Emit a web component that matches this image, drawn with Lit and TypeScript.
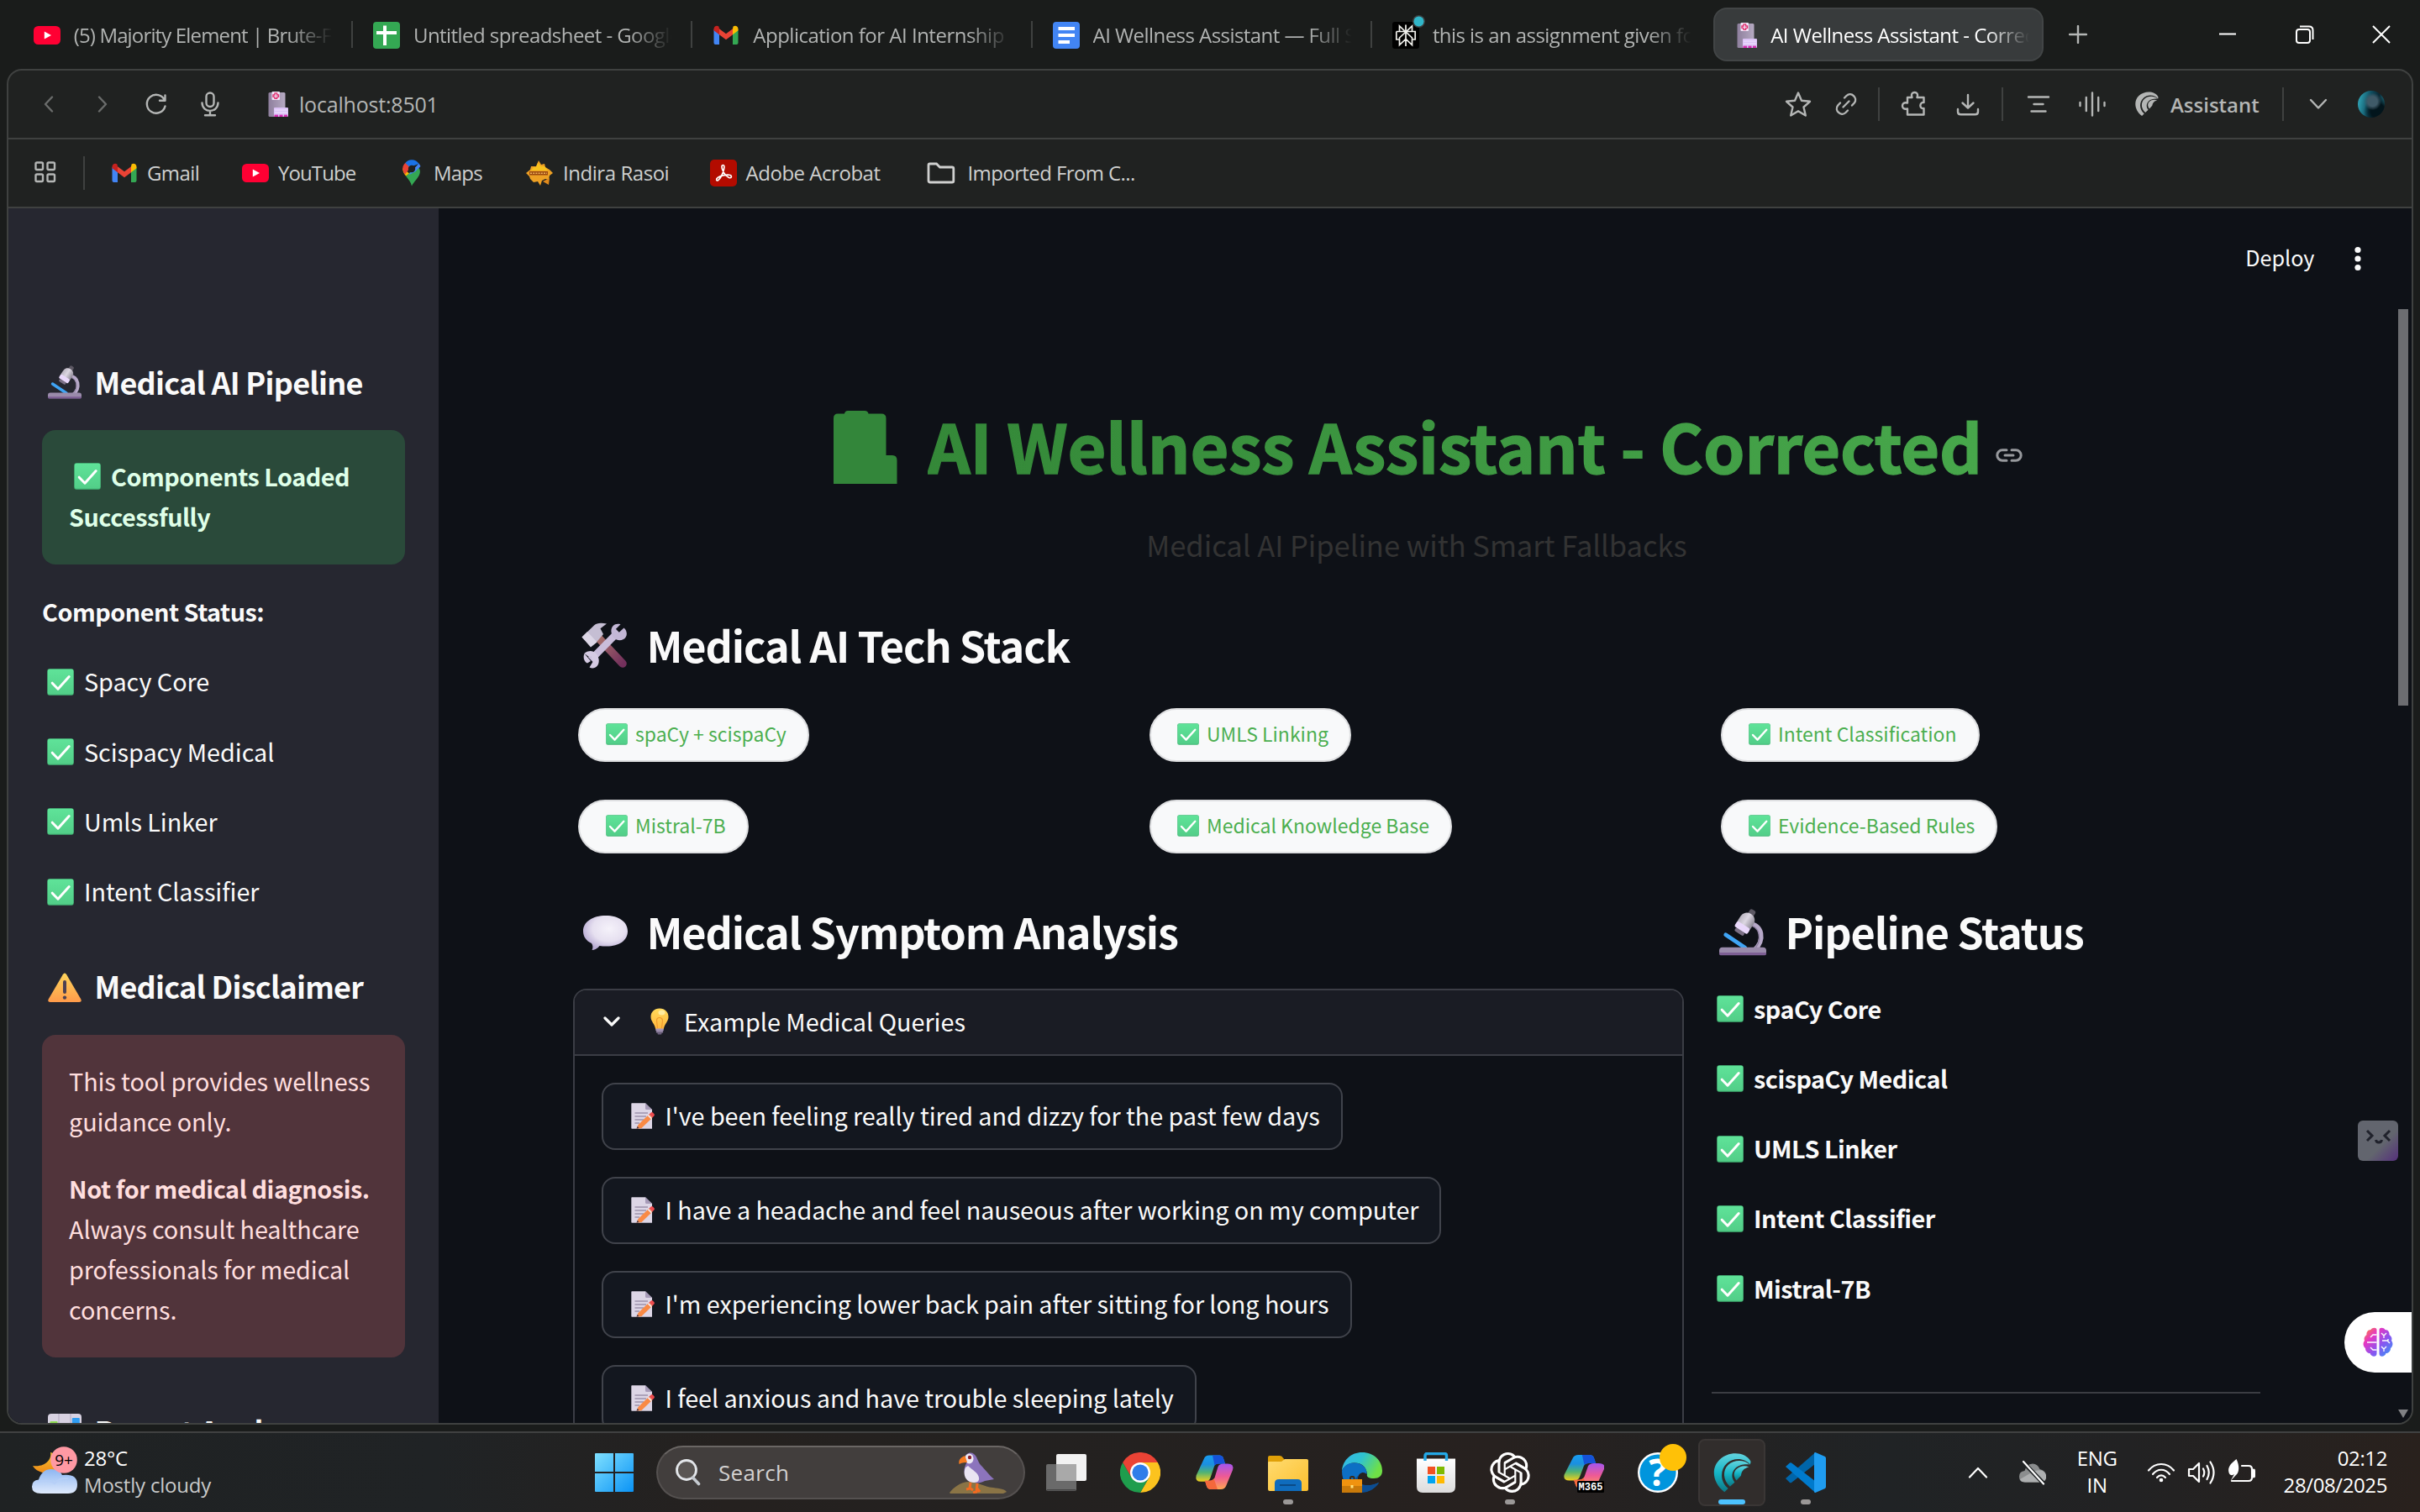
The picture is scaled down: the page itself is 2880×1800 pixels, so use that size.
import { LitElement, html, svg, css } from "lit";
import { customElement } from "lit/decorators.js";
import { classMap } from "lit/directives/class-map.js";

/* ---------- emoji ---------- */

const check = (cls = "e32") => html`<svg class=${cls} viewBox="0 0 32 32">
  <rect x=".3" y=".3" width="31.4" height="31.4" rx="2.6" fill="#43b877" />
  <rect x=".8" y=".8" width="30.6" height="29.6" rx="2.2" fill="url(#gCheck)" />
  <path d="M6.2 17.2 13 24.2 26.2 9.6" fill="none" stroke="#fff" stroke-width="3" stroke-linecap="round" stroke-linejoin="round" />
</svg>`;

const microscope = (cls: string) => html`<svg class="over ${cls}" viewBox="0 0 40 40">
  <path d="M25 12.5C37 13 39 27 30 35" fill="none" stroke="#b7a9c9" stroke-width="4" />
  <path d="M25 12.5C37 13 39 27 30 35" fill="none" stroke="#8d7fa0" stroke-width="1" transform="translate(-1.6 .8)" />
  <path d="M5.5 22 22 33" stroke="#3fa4f5" stroke-width="3.4" stroke-linecap="round" />
  <g transform="translate(0 2.6) rotate(33 21 11)">
    <rect x="18.4" y="-4" width="5.4" height="7" rx="1.6" fill="#5c5863" />
    <rect x="14.6" y="0" width="13" height="17" rx="6" fill="url(#gSilver)" />
    <rect x="14.6" y="11" width="13" height="5.5" rx="1.6" fill="#e9d8fb" />
    <rect x="16.6" y="16.4" width="9" height="3.2" rx="1.4" fill="#7b7086" />
  </g>
  <rect x="0" y="32.6" width="40" height="6.6" rx="2.8" fill="#9a8bab" />
  <rect x="0" y="37.2" width="40" height="2.2" rx="1.1" fill="#7d5f94" />
</svg>`;

const warning = html`<svg class="e40 warn" viewBox="0 0 40 40">
  <path d="M17.8 4.2Q20 1 22.2 4.2L39.3 33.4Q40.6 37 37.4 37H2.6Q-.6 37 .7 33.4Z" fill="url(#gWarn)" />
  <rect x="18" y="11" width="4" height="16" rx="2" fill="#4d4152" />
  <circle cx="20" cy="31.6" r="2.2" fill="#4d4152" />
</svg>`;

const chart = html`<svg class="e40" viewBox="0 0 40 40">
  <rect width="40" height="40" rx="4" fill="#d8d2e2" />
  <path d="M13 0V40M27 0V40M0 20H40" stroke="#b9b0c6" stroke-width="1.2" />
  <rect x="2.5" y="9" width="9" height="31" rx="1" fill="#8fdc52" />
  <rect x="15.5" y="16" width="9" height="24" rx="1" fill="#f0506b" />
  <rect x="28.8" y="5" width="9" height="35" rx="1" fill="#2f9df2" />
</svg>`;

const tools = html`<svg class="e56" viewBox="0 0 56 56">
  <path d="M20 17 50 49" stroke="url(#gHandle)" stroke-width="9.5" stroke-linecap="round" />
  <path d="M1.5 17.5 16 3.5C19 .6 24 0 31 1.5L23.5 7.2 27 14 18 24.5 12 27.5Z" fill="#c5bed3" />
  <path d="M1.5 17.5 8 11l11.5 12.5L12 29.5Z" fill="#dcd6e6" />
  <path d="M12 44.5 45 11" stroke="#c9bddb" stroke-width="8.4" />
  <path d="M51.5 6.5 45 12.6 42.6 11 42 7.8 47.5 2.2C41 .2 35.6 4.5 36.5 11.5 37.5 19 44.5 23.5 51 20 55.5 17.500 56.500 11 51.500 6.500Z" fill="#c3b7d6" />
  <path d="M4.500 37 10.500 41.500 13 40 12.500 43.500 15 46 10.500 53.500C17 57 23 50.500 21.500 43.500 20.500 36.500 14.500 32.500 8.500 34.500 6.500 35.200 5 36 4.500 37ZM4.500 37C2.500 41 4 47 8 48.500L12 46 7 40Z" fill="#d5cbe3" />
</svg>`;

const bubble = html`<svg class="e56" viewBox="0 0 56 56">
  <path d="M30 8C45.500 8 56 15.500 56 26.500 56 37.500 46 44.500 31 44.500 27.500 44.500 25 44.500 22.500 44 20 47.500 16.500 49 13.500 49 15 46.500 14.500 43 13 41 6.500 38 3 33 3 26.500 3 15.500 14 8 30 8Z" fill="url(#gBubble)" />
</svg>`;

const bulb = html`<svg class="bulb" viewBox="0 0 22 32">
  <path d="M11 .5C17.500 .5 21.500 5 21.500 10.500 21.500 16 17 18.500 15.800 25H6.200C5 18.500 .5 16 .5 10.500 .5 5 4.500 .5 11 .5Z" fill="url(#gBulb)" />
  <path d="M8.500 24 7.500 15a3.500 3.500 0 1 1 7 0L13.500 24" fill="none" stroke="#f09a2e" stroke-width="1.200" />
  <ellipse cx="13.500" cy="5.500" rx="4" ry="3" fill="#fff3b0" opacity=".8" />
  <rect x="6.200" y="24.600" width="9.600" height="2.600" rx="1" fill="#a596b5" />
  <rect x="6.800" y="27" width="8.400" height="2.600" rx="1" fill="#8f80a0" />
  <rect x="8.500" y="29.400" width="5" height="2.200" rx="1" fill="#6f6180" />
</svg>`;

const memo = html`<svg class="memo" viewBox="0 0 28 31">
  <path d="M1 .3H17L25 8V30.700H1Q.3 30.700 .3 30V1Q.3 .3 1 .3Z" fill="#ddd6e6" />
  <path d="M17 .3 25 8H18.500Q17 8 17 6.500Z" fill="#a79bb8" />
  <path d="M4.500 12H20M4.500 16H18M4.500 20H15M4.500 24H10" stroke="#9d93ac" stroke-width="1.300" />
  <path d="M21.500 13.500 25.500 17.500 12.500 30 6.500 30.700 8.500 26Z" fill="#f98a45" />
  <path d="M21.500 13.500 24 11.200Q25 10.500 26 11.500L27.500 13.200Q28.300 14.200 27.500 15.300L25.500 17.500Z" fill="#ee4b4e" />
  <path d="M20.300 14.600 24.300 18.600" stroke="#f4eef8" stroke-width="1.500" />
  <path d="M6.500 30.700 7.600 27.800 9.600 30Z" fill="#4b3b50" />
</svg>`;

const hospital = html`<svg class="hosp" viewBox="0 0 24 30">
  <rect x=".5" y="1" width="20" height="29" rx="1.500" fill="url(#gHosp)" />
  <rect x="7" y="19" width="17" height="11" rx="1" fill="#dcc3f6" />
  <path d="M8 22H23M8 25H23" stroke="#f1e6ff" stroke-width="1.200" />
  <rect x="7.500" y="27.600" width="4.500" height="2.400" fill="#d42bb2" />
  <rect x="13.500" y="27.600" width="4" height="2.400" fill="#d42bb2" />
  <rect x="19" y="27.600" width="4" height="2.400" fill="#d42bb2" />
  <rect x="4.500" width="9.500" height="10" rx="1" fill="#efe6f8" />
  <path d="M8 1.800h2.600V4h2V6.400h-2V8.400H8V6.400H6V4H8Z" fill="none" stroke="#e02d6c" stroke-width="1.300" />
</svg>`;

/* ---------- site icons ---------- */

const youtube = html`<svg class="e32" viewBox="0 0 32 32">
  <rect y="5" width="32" height="22" rx="5.500" fill="#ff0033" />
  <path d="M12.800 11.400 21 16 12.800 20.600Z" fill="#fff" />
</svg>`;
const sheets = html`<svg class="e32" viewBox="0 0 32 32">
  <rect width="32" height="32" rx="4" fill="#34a853" />
  <path d="M14 4.500V28M4 13H28" stroke="#fff" stroke-width="4" />
</svg>`;
const gmail = html`<svg class="e32" viewBox="0 0 32 32">
  <path d="M1.500 9V25q0 2 2 2H8V14Z" fill="#4285f4" />
  <path d="M30.500 9V25q0 2-2 2H24V14Z" fill="#34a853" />
  <path d="M24 8.300V15.200L30.500 10.300V8.500C30.500 5.300 27 3.800 24.600 5.600Z" fill="#fbbc04" />
  <path d="M8 8.300 16 14.300 24 8.300V15.200L16 21.200 8 15.200Z" fill="#ea4335" />
  <path d="M8 8.300V15.200L1.500 10.300V8.500C1.500 5.300 5 3.800 7.400 5.600Z" fill="#c5221f" />
</svg>`;
const docs = html`<svg class="e32" viewBox="0 0 32 32">
  <rect width="32" height="32" rx="4" fill="#4285f4" />
  <path d="M6.500 8H26M6.500 16H26M6.500 24H20" stroke="#fff" stroke-width="4" />
</svg>`;
const perplexity = html`<svg class="e32 over" viewBox="0 0 32 32">
  <rect width="32" height="32" rx="3" fill="#000" />
  <path d="M8.500 11.500V5L16 12 23.500 5V11.500M4.800 11.500H27.200V21H23.500M8.500 21H4.800V11.500M16 3.500V29M16 12 8.500 19V27.500L16 20.500 23.500 27.500V19Z" fill="none" stroke="#f2f2ee" stroke-width="1.700" />
  <circle cx="31.500" cy="-.5" r="7.500" fill="#3c4243" />
  <circle cx="31.500" cy="-.5" r="6" fill="#30b6c9" />
</svg>`;
const maps = html`<svg class="e32" viewBox="0 0 32 32">
  <path d="M16 31.500C15 27 12.500 24 9 19.500L22.500 7.500C28 13 26 18 22 23 19 26.500 17.200 29 16 31.500Z" fill="#34a853" />
  <path d="M9 19.500C6.500 16.500 5 13.500 5.300 10L13 16.500Z" fill="#fbbc04" />
  <path d="M8.500 3.800 15 8.500 8 17.500C4 12 4.500 7.500 8.500 3.800Z" fill="#ea4335" />
  <path d="M16 .3C12.500 .3 10.200 1.800 8.300 4L13.500 9 24.500 5C22.800 2 19.800 .3 16 .3Z" fill="#1a73e8" />
  <path d="M24.500 4.600 12 18.500 20 14.500 26.500 8Z" fill="#4285f4" />
  <circle cx="16" cy="11" r="4.200" fill="#1f2120" />
</svg>`;
const rasoi = html`<svg class="e32" viewBox="0 0 32 32">
  <path d="M15 1 18 6 22 5 23 9 28 12 32 16 28 19 27 24 23 23 19 25 17 31 14 26 9 27 5 23 4 20 0 16 5 12 6 8 12 8Z" fill="#eda024" />
  <path d="M14 4 18 8 22 8 26 13 6 13 9 9 12 9Z" fill="#f7c21f" />
  <rect x="4" y="14" width="22" height="4.500" fill="#9c4a10" />
  <path d="M5 16.200H25" stroke="#f2b45a" stroke-width="1.400" stroke-dasharray="2 1.200" />
  <path d="M20 26 28 22 27 30Z" fill="#e08a1c" />
</svg>`;
const acrobat = html`<svg class="e32" viewBox="0 0 32 32">
  <rect width="32" height="32" rx="5" fill="#b30b00" />
  <path d="M15.500 6.500C13.500 6.500 13.700 9.500 15.200 13 16.500 16.500 19 19.500 22.500 21.500 25.500 22.500 26.500 19.500 24 18.500 20 17.500 13 19 9.500 21.200 6.500 23 7.500 26 9.800 24.500 12.500 22 15.500 15.500 16.500 11.500 17.200 8.500 17 6.500 15.500 6.500Z" fill="none" stroke="#fff" stroke-width="1.700" />
</svg>`;
const folderLine = html`<svg class="folder" viewBox="0 0 34 26">
  <path d="M2 3.500Q2 2 3.500 2H11.500L15.500 6H30Q31.800 6 31.800 7.800V22.200Q31.800 24 30 24H4Q2 24 2 22Z" fill="none" stroke="#cfd0cf" stroke-width="2.800" />
</svg>`;

/* Fan of curved blades; shared by the toolbar button and the dock icon. */
const blades = (fill: string) => svg`
  <path d="M10 32C.5 25 -1.500 12.500 6 5.500 13-1.500 27-1.500 31.500 7L31 9.500C27 4.500 18 3 12 8.500 6 14 6.500 24 13 29Z" fill=${fill} />
  <path d="M14.500 27.500C8.500 22 8.500 14 13 9.800 17.500 5.500 26 5 30.500 9.500 27 9 22 9.500 18.800 12.600 15.500 16 15.500 20.500 18.300 24Z" fill=${fill} />
  <path d="M19.800 22.500C17 19 17.500 15.500 19.800 13.300 22.500 10.700 26.500 10 30 11.500 26 12.500 24 14.500 23.500 18.500Z" fill=${fill} />`;

const copilot = svg`
  <path d="M10 4Q11.500 0 16 0H28Q32 0 33 4L35 11H27Q23 11 21.800 15L17.500 29Q16 34 11 34H6Q-1 34 .6 26Z" fill="url(#gCopA)" />
  <path d="M20 0H28Q32 0 33 4L35 11H27Q24 11 22.500 13Z" fill="#1552d8" />
  <path d="M36 40Q34.500 44 30 44H18Q14 44 13 40L11 33H16Q21 33 22.500 29L26.500 15Q28 11 33 11H38Q46 11 44 19Z" fill="url(#gCopB)" />
  <path d="M26 44H18Q14 44 13 40L11 33H16Q20 33 21.500 30Z" fill="#f4683c" />`;

/* ---------- dock ---------- */

interface DockApp { icon: unknown; run?: boolean; active?: boolean; }

const dock: DockApp[] = [
  { icon: html`<svg class="e48" viewBox="0 0 48 48"><rect x="12" y="2" width="36" height="32" rx="2" fill="#f2f2f2" /><rect y="14" width="36" height="32" rx="2" fill="#6a6a6a" /><path d="M12 14H36V34H12Z" fill="#a9a9a9" /><path d="M1 44.800H35" stroke="#444" stroke-width="1.500" /></svg>` },
  { icon: html`<svg class="e48" viewBox="0 0 48 48"><path d="M24 24V12H44.800A24 24 0 0 1 24 48L34.400 30Z" fill="#fcc31e" /><path d="M3.200 12 13.600 30 24 36 34.400 30 24 48A24 24 0 0 1 3.200 12Z" fill="#1f9d4d" /><path d="M13.600 30 3.200 12A24 24 0 0 1 44.800 12H24V24Z" fill="#ea4335" /><circle cx="24" cy="24" r="12" fill="#fff" /><circle cx="24" cy="24" r="9.600" fill="#2f7de9" /></svg>` },
  { icon: html`<svg class="e48" viewBox="-2 -2 48 48"><g transform="translate(0 1.500) scale(1 .92)">${copilot}</g></svg>` },
  { icon: html`<svg class="e48" viewBox="0 0 48 48"><path d="M0 6Q0 4 2 4H14Q16 4 17 5.500L20 9H46Q48 9 48 11V20H0Z" fill="#e0a008" /><path d="M0 12Q0 11 1 11H16L20 8H46Q48 8 48 10V44Q48 46 46 46H2Q0 46 0 44Z" fill="url(#gFolder)" /><path d="M8 46V37Q8 32 13 32H35Q40 32 40 37V46Z" fill="#0f6cbd" /><path d="M14 39H33" stroke="#0b4a86" stroke-width="2" /></svg>`, run: true },
  { icon: html`<svg class="e48" viewBox="0 0 48 48"><path d="M0 22C1 9 11 0 24 0 38 0 48 10 48 22 48 28 44 31 38 31 32 31 29 29.500 30 26 29 16 22 12 14 12.500 7 13 2 17 0 22Z" fill="url(#gEdgeA)" /><path d="M0 22C3 15 9 12 15 12.500 24 13 30 18 29.500 26 26 22 20 24 19 30 18 38 26 44 44 36 38 45 28 49 18 47 7 44 0 35 0 22Z" fill="#0d6fc4" /><path d="M19 30C18 39 30 42 44 36 38 45 30 48 24 47.500 15 44 12 34 19 28Z" fill="#0c4d92" /><path d="M10 32V30.500Q10 29 11.500 29H13Q14.500 29 14.500 30.500V32" fill="none" stroke="#3a2a1a" stroke-width="2" /><rect y="32" width="24" height="16" fill="#c97a0a" /><rect y="32" width="24" height="8" fill="#f0930f" /><rect x="10.500" y="39" width="3" height="3.500" fill="#ffe27a" /></svg>` },
  { icon: html`<svg class="e48" viewBox="0 0 48 48"><path d="M1 7.500H47V41Q47 48 40 48H8Q1 48 1 41Z" fill="url(#gStore)" /><path d="M11 10V4Q11 1.500 13.500 1.500H34Q36.500 1.500 36.500 4V10" fill="none" stroke="#24a8e6" stroke-width="3.400" /><rect x="14" y="17" width="9" height="9" fill="#f25022" /><rect x="25" y="17" width="9" height="9" fill="#7fba00" /><rect x="14" y="28" width="9" height="9" fill="#00a4ef" /><rect x="25" y="28" width="9" height="9" fill="#ffb900" /></svg>` },
  { icon: html`<svg class="e48" viewBox="0 0 24 24"><path fill="#fff" d="M22.2819 9.8211a5.9847 5.9847 0 0 0-.5157-4.9108 6.0462 6.0462 0 0 0-6.5098-2.9A6.0651 6.0651 0 0 0 4.9807 4.1818a5.9847 5.9847 0 0 0-3.9977 2.9 6.0462 6.0462 0 0 0 .7427 7.0966 5.98 5.98 0 0 0 .511 4.9107 6.051 6.051 0 0 0 6.5146 2.9001A5.9847 5.9847 0 0 0 13.2599 24a6.0557 6.0557 0 0 0 5.7718-4.2058 5.9894 5.9894 0 0 0 3.9977-2.9001 6.0557 6.0557 0 0 0-.7475-7.0729zm-9.022 12.6081a4.4755 4.4755 0 0 1-2.8764-1.0408l.1419-.0804 4.7783-2.7582a.7948.7948 0 0 0 .3927-.6813v-6.7369l2.02 1.1686a.071.071 0 0 1 .038.052v5.5826a4.504 4.504 0 0 1-4.4945 4.4944zm-9.6607-4.1254a4.4708 4.4708 0 0 1-.5346-3.0137l.142.0852 4.783 2.7582a.7712.7712 0 0 0 .7806 0l5.8428-3.3685v2.3324a.0804.0804 0 0 1-.0332.0615L9.74 19.9502a4.4992 4.4992 0 0 1-6.1408-1.6464zM2.3408 7.8956a4.485 4.485 0 0 1 2.3655-1.9728V11.6a.7664.7664 0 0 0 .3879.6765l5.8144 3.3543-2.0201 1.1685a.0757.0757 0 0 1-.071 0l-4.8303-2.7865A4.504 4.504 0 0 1 2.3408 7.872zm16.5963 3.8558L13.1038 8.364 15.1192 7.2a.0757.0757 0 0 1 .071 0l4.8303 2.7913a4.4944 4.4944 0 0 1-.6765 8.1042v-5.6772a.79.79 0 0 0-.407-.667zm2.0107-3.0231l-.142-.0852-4.7735-2.7818a.7759.7759 0 0 0-.7854 0L9.409 9.2297V6.8974a.0662.0662 0 0 1 .0284-.0615l4.8303-2.7866a4.4992 4.4992 0 0 1 6.6802 4.66zM8.3065 12.863l-2.02-1.1638a.0804.0804 0 0 1-.038-.0567V6.0742a4.4992 4.4992 0 0 1 7.3757-3.4537l-.142.0805L8.704 5.459a.7948.7948 0 0 0-.3927.6813zm1.0976-2.3654l2.602-1.4998 2.6069 1.4998v2.9994l-2.5974 1.4997-2.6067-1.4997Z" /></svg>`, run: true },
  { icon: html`<svg class="e48" viewBox="0 0 48 48"><g transform="translate(0 3) scale(1.090 .9)">${copilot}</g><rect x="16" y="34" width="32" height="14" rx="1.500" fill="#000" /><text class="m365" x="32" y="45.300" text-anchor="middle">M365</text></svg>` },
  { icon: html`<svg class="e48 over" viewBox="0 0 48 48"><circle cx="24" cy="24" r="24" fill="#fff" /><circle cx="24" cy="24" r="21.600" fill="#0095dd" /><text class="qmark" x="24" y="40" text-anchor="middle">?</text><circle cx="42" cy="6" r="16" fill="#ffc107" /></svg>` },
  { icon: html`<svg class="e48" viewBox="-.5 -.5 33 33">${blades("url(#gTeal)")}</svg>`, run: true, active: true },
  { icon: html`<svg class="e48" viewBox="0 0 48 48"><path d="M0 31 5 36Q6 36.500 7 36L40 10 35.500 0Z" fill="#0065a9" /><path d="M0 17 5 12.500Q6 12 7 12.500L40 38 35.500 48Z" fill="#007acc" /><path d="M35.500 0 47 5Q48 6 48 7V41Q48 42 47 43L35.500 48Q33.500 48 34 46V2Q33.500 0 35.500 0Z" fill="#1f9cf0" /></svg>`, run: true },
];

const tabs = [
  { icon: youtube, title: "(5) Majority Element | Brute-Force", cls: "t0" },
  { icon: sheets, title: "Untitled spreadsheet - Google Sheets", cls: "t1" },
  { icon: gmail, title: "Application for AI Internship P", cls: "t2" },
  { icon: docs, title: "AI Wellness Assistant — Full Stack", cls: "t3" },
  { icon: perplexity, title: "this is an assignment given for", cls: "t4" },
  { icon: hospital, title: "AI Wellness Assistant - Corrected", cls: "t5" },
];

const bookmarks = [
  { icon: gmail, label: "Gmail", cls: "b0" },
  { icon: youtube, label: "YouTube", cls: "b1" },
  { icon: maps, label: "Maps", cls: "b2" },
  { icon: rasoi, label: "Indira Rasoi", cls: "b3" },
  { icon: acrobat, label: "Adobe Acrobat", cls: "b4" },
  { icon: folderLine, label: "Imported From C...", cls: "b5" },
];

const components = ["Spacy Core", "Scispacy Medical", "Umls Linker", "Intent Classifier"];
const stack = ["spaCy + scispaCy", "UMLS Linking", "Intent Classification", "Mistral-7B", "Medical Knowledge Base", "Evidence-Based Rules"];
const pipeline = ["spaCy Core", "scispaCy Medical", "UMLS Linker", "Intent Classifier", "Mistral-7B"];
const queries = [
  "I've been feeling really tired and dizzy for the past few days",
  "I have a headache and feel nauseous after working on my computer",
  "I'm experiencing lower back pain after sitting for long hours",
  "I feel anxious and have trouble sleeping lately",
];

@customElement("app-root")
export class AppRoot extends LitElement {
  static styles = css`
    :host {
      display: flex;
      flex-direction: column;
      position: relative;
      width: 2880px;
      height: 1800px;
      overflow: hidden;
      background: #1a1c1b;
      color: #fafafa;
      font-family: "Open Sans", "Noto Sans", sans-serif;
      font-size: 24px;
      white-space: nowrap;
    }
    * { box-sizing: border-box; }
    svg { display: block; flex: none; }
    h1, h2, p { margin: 0; font: inherit; }
    .defs { position: absolute; width: 0; height: 0; }
    .e26 { width: 26px; height: 26px; }
    .e32 { width: 32px; height: 32px; }
    .e40 { width: 40px; height: 40px; }
    .e48 { width: 48px; height: 48px; }
    .e56 { width: 56px; height: 56px; }
    .over { overflow: visible; }
    .ic { fill: none; stroke: #b4b6b5; stroke-width: 2.4; stroke-linecap: round; stroke-linejoin: round; }

    /* tab strip */
    .tabs { display: flex; align-items: center; height: 82px; padding-left: 15.7px; flex: none; }
    .tab { display: flex; align-items: center; width: 404.3px; height: 64px; padding-left: 24px; gap: 16px; position: relative; color: #b1b3b2; }
    .tab::after { content: ""; position: absolute; right: 0; top: 16px; width: 2px; height: 32px; background: #3f4140; }
    .tab.t4::after { display: none; }
    .fav { width: 32px; display: flex; justify-content: center; padding-top: 2px; flex: none; }
    .hosp { width: 24px; height: 30px; }
    .title { width: 308px; overflow: hidden; letter-spacing: -0.5px; -webkit-mask-image: linear-gradient(90deg, #000 256px, transparent 308px); mask-image: linear-gradient(90deg, #000 256px, transparent 308px); }
    .t0 .title { letter-spacing: -0.85px; }
    .t1 .title { letter-spacing: -0.56px; }
    .t3 .title { letter-spacing: -0.56px; }
    .t4 .title { letter-spacing: -0.56px; }
    .tab.t5 { width: 393px; margin-left: 2px; gap: 12px; background: #383b3c; border: 2px solid #424546; border-radius: 16px; padding-left: 22px; color: #fff; }
    .tab.t5::after { display: none; }
    .newtab { width: 22px; height: 22px; margin-left: 30px; }
    .winbtns { display: flex; align-items: center; margin-left: auto; padding-right: 35px; gap: 69.5px; }
    .win { width: 22px; height: 22px; fill: none; stroke: #fff; stroke-width: 2; }

    /* browser window */
    .window { display: flex; flex-direction: column; width: 2864px; height: 1614px; margin-left: 8px; flex: none; border: 2px solid #3f4140; border-radius: 18px; overflow: hidden; background: #202221; }
    .bar { display: flex; align-items: center; height: 82px; flex: none; border-bottom: 2px solid #3f4140; }
    .toolbar { padding-left: 16px; padding-right: 32px; }
    .cell { width: 64px; display: flex; justify-content: center; flex: none; }
    .cell.star { width: 56px; }
    .cell.link { width: 57px; }
    .dim { stroke: #6a6c6b; }
    .url { display: flex; align-items: center; gap: 13px; margin-left: 37px; font-size: 25px; color: #b4b6b5; letter-spacing: -0.2px; }
    .right { display: flex; align-items: center; margin-left: auto; }
    .div { width: 2px; height: 40px; background: #3f4140; flex: none; }
    .d1 { margin: 0 9px 0 10px; }
    .d2 { margin: 0 10px 0 8px; }
    .d3 { margin: 0 9px 0 27px; }
    .assistant { display: flex; align-items: center; gap: 14px; margin-left: 18px; font-weight: 600; color: #b4b6b5; width: 149px; }
    .avatar { width: 32px; height: 32px; border-radius: 50%; margin-left: 15px; background: radial-gradient(circle at 55% 40%, #3f5a68 0 22%, transparent 40%), radial-gradient(circle at 75% 75%, #02151c 0 25%, transparent 50%), linear-gradient(100deg, #35b2c4, #0e4a5c 45%, #0a2733 70%, #2a98ab); }
    .marks { padding: 0 0 2px 31px; color: #cfd0cf; }
    .marks .div { margin: 2px 31px 0 32px; }
    .mark { display: flex; align-items: center; }
    .mark svg { margin-top: 2px; }
    .b0 { letter-spacing: -0.6px; width: 156px; gap: 11px; }
    .b1 { letter-spacing: -0.9px; width: 186px; gap: 11px; }
    .b2 { letter-spacing: -0.8px; width: 152px; gap: 10px; }
    .b3 { letter-spacing: -0.45px; width: 218.5px; gap: 12px; }
    .b4 { letter-spacing: -0.47px; width: 258px; gap: 11px; }
    .b5 { letter-spacing: -0.6px; gap: 15px; }
    .folder { width: 34px; height: 26px; }

    /* page */
    .page { display: flex; flex: 1; min-height: 0; position: relative; font-family: "Noto Sans CJK JP", "Open Sans", sans-serif; font-size: 28.8px; line-height: 48px; background: #0e1117; }
    .sidebar { width: 512px; height: 1446px; overflow: hidden; flex: none; background: #262730; padding: 182px 40px 0 40px; }
    .row { display: flex; align-items: center; }
    .side-h { display: flex; align-items: center; height: 48px; padding-left: 7px; gap: 15.5px; font-size: 36px; font-weight: 700; letter-spacing: -0.76px; }
    .side-h .over { margin-top: 2px; }
    .side-h .warn { margin-top: 6px; }
    .side-h.second { margin-top: 64px; }
    .side-h.third { margin-top: 63px; }
    .ok { height: 160px; margin-top: 34px; padding: 31px 32px; border-radius: 16px; background: #2a4a3a; color: #dfffe8; font-weight: 700; letter-spacing: -0.47px; }
    .ok .row { padding-left: 6px; gap: 12px; }
    .strong { font-weight: 700; letter-spacing: -0.5px; }
    .status { margin-top: 32.4px; }
    .items { display: flex; flex-direction: column; gap: 35.3px; margin-top: 35px; padding-left: 6px; }
    .items .row { gap: 12px; height: 48px; letter-spacing: -0.05px; }
    .items svg { margin-top: 1px; }
    .alert { height: 384px; margin-top: 35px; padding: 30.4px 32px; border-radius: 16px; background: #51343b; color: #ffdede; letter-spacing: -0.1px; }
    .alert p + p { margin-top: 32px; }
    .alert .strong { letter-spacing: -0.42px; }

    .main { flex: 1; height: 1446px; overflow: hidden; padding: 0 180px 0 160px; }
    .deploy { display: flex; align-items: center; justify-content: flex-end; height: 116px; margin-right: -123px; font-size: 25.2px; gap: 44.5px; }
    .dots { width: 14px; height: 30px; margin-top: 4px; }
    .h1 { display: flex; align-items: center; height: 96px; margin-top: 117.5px; padding-left: 310px; font-size: 79.2px; line-height: 96px; font-weight: 700; letter-spacing: -0.2px; }
    .h1 span { margin-left: 36px; background: linear-gradient(90deg, #348838, #47a74b); -webkit-background-clip: text; background-clip: text; color: transparent; -webkit-text-stroke: 1.4px transparent; }
    .silhouette { width: 76px; height: 88px; margin-top: 6px; }
    .anchor { width: 32px; height: 16px; margin: 24px 0 0 16.5px; fill: none; stroke: #97999d; stroke-width: 3; stroke-linecap: round; }
    .sub { height: 58px; line-height: 58px; margin-top: 41.5px; text-align: center; font-size: 34.56px; letter-spacing: -0.05px; color: #333; }
    .h2 { display: flex; align-items: center; height: 68px; padding: 2px 0 0 9px; gap: 22.5px; font-size: 50.4px; font-weight: 700; letter-spacing: -1.12px; }
    .h2 svg { margin-top: 2px; }
    .h2.first { margin-top: 56px; }
    .pills { display: grid; grid-template-columns: repeat(3, 680px); gap: 45px 0; margin: 42px -60px 0 6px; }
    .pill { display: flex; align-items: center; width: max-content; height: 64px; padding: 0 25px 5px 31px; gap: 9px; border: 2px solid #dedfe1; border-radius: 40px; background: #f8f9fa; color: #4caf50; font-size: 23px; line-height: 36px; }
    .pill svg { margin-top: 3px; }
    .cols { display: flex; gap: 33px; margin-top: 58px; }
    .left { width: 1322px; flex: none; }
    .rightcol { flex: 1; }
    .expander { height: 700px; margin-top: 35px; border: 2px solid #3b3d45; border-radius: 16px; overflow: hidden; }
    .exp-h { display: flex; align-items: center; height: 78px; padding: 0 0 3px 34px; border-bottom: 2px solid #3b3d45; background: #1a1c24; }
    .chev { width: 20px; height: 12px; margin-right: 36px; fill: none; stroke: #fafafa; stroke-width: 3.2; stroke-linecap: round; stroke-linejoin: round; }
    .bulb { width: 22px; height: 32px; margin-right: 18px; }
    .queries { display: flex; flex-direction: column; align-items: flex-start; gap: 32px; padding: 32px; }
    .q { display: flex; align-items: center; height: 80px; padding: 0 25px 3px 33px; gap: 12.5px; border: 2px solid #40434b; border-radius: 16px; background: #13171f; letter-spacing: -0.07px; }
    .memo { width: 28px; height: 31px; margin-top: 2px; }
    .rightcol .items { margin-top: 34.5px; padding-left: 6px; }
    .rightcol .items .row { font-weight: 700; letter-spacing: -0.5px; gap: 12px; }
    .rule { height: 2px; margin-top: 99.5px; background: #3b3d43; }

    /* floating widgets over the page */
    .thumb { position: absolute; right: 4px; top: 120px; width: 12px; height: 472px; background: #6c6d71; }
    .arrow { position: absolute; right: 4px; bottom: 6px; width: 12px; height: 11px; }
    .face { position: absolute; right: 16px; top: 1086px; width: 48px; height: 48px; border-radius: 6px; background: linear-gradient(135deg, #62656e 0 60%, #55307c 100%); }
    .brain { position: absolute; right: 0; top: 1314px; width: 80px; height: 72px; border-radius: 36px 0 0 36px; background: #fff; padding: 18px 0 0 21px; }

    /* taskbar */
    .taskbar { display: flex; align-items: center; height: 96px; margin-top: 8px; flex: none; border-top: 2px solid #404141; background: linear-gradient(90deg, #1f2223 0, #202325 18%, #25211f 30%, #232120 42%, #27211f 62%, #202325 78%, #222223 88%, #29211d 100%); color: #fff; }
    .weather { display: flex; width: 708px; padding: 0 0 3px 38px; flex: none; line-height: 32px; letter-spacing: -0.2px; }
    .weather svg { width: 58px; height: 58px; margin: 2px 4px 0 0; }
    .weather .cond { color: #c9caca; }
    .start { width: 46px; height: 46px; margin-right: 27px; }
    .search { display: flex; align-items: center; width: 439px; height: 64px; margin-right: 5px; padding: 0 20px 0 21px; border-radius: 32px; border: 2px solid #555150; border-top-color: #6a6664; background: #423e3d; color: #d2d1d0; font-size: 26px; letter-spacing: 0.3px; }
    .search .mag { width: 30px; height: 32px; margin-right: 21px; }
    .search .bird { width: 68px; height: 50px; margin-left: auto; }
    .app { position: relative; display: flex; align-items: center; justify-content: center; width: 88px; height: 80px; }
    .app.active::before { content: ""; position: absolute; inset: 0 4px; border-radius: 8px; background: #312d2c; border: 2px solid #3a3635; }
    .app svg { position: relative; }
    .app.run::after { content: ""; position: absolute; left: 50%; bottom: 2px; width: 12px; height: 6px; margin-left: -6px; border-radius: 3px; background: #9b9897; }
    .app.active::after { width: 32px; margin-left: -16px; background: #4cc2ff; }
    .m365 { font: 700 12px "Liberation Mono", monospace; fill: #fff; }
    .qmark { font: 700 45px "Open Sans", sans-serif; fill: #fff; }
    .badge { font: 400 19px "Open Sans", sans-serif; fill: #000; }
    .tray { display: flex; align-items: center; margin-left: auto; padding: 0 39px 2px 0; line-height: 32px; letter-spacing: -0.4px; }
    .tray svg { margin-top: 2px; fill: none; stroke: #fff; stroke-width: 2.2; stroke-linecap: round; stroke-linejoin: round; }
    .up { width: 24px; height: 14px; margin-right: 36px; }
    .cloud { width: 34px; height: 30px; margin-right: 36px; }
    .lang { text-align: center; width: 48px; margin-right: 35px; }
    .wifi { width: 34px; height: 24px; margin-right: 14px; }
    .vol { width: 34px; height: 32px; margin-right: 14px; }
    .bat { width: 34px; height: 32px; margin-right: 33px; }
    .clock { text-align: right; }
  `;

  private renderDefs() {
    const lin = (id: string, stops: [string, string][], x2 = 0, y2 = 1) => svg`<linearGradient id=${id} x1="0" y1="0" x2=${x2} y2=${y2}>${stops.map(([o, c]) => svg`<stop offset=${o} stop-color=${c} />`)}</linearGradient>`;
    return html`<svg class="defs" aria-hidden="true"><defs>
      ${lin("gCheck", [["0", "#5fe399"], ["1", "#52ce88"]])}
      ${lin("gSilver", [["0", "#b9b4c0"], [".45", "#dcd7e2"], ["1", "#8f8a97"]], 1, 0)}
      ${lin("gWarn", [["0", "#fdd55c"], ["1", "#ff9b4a"]])}
      ${lin("gHandle", [["0", "#a9726b"], ["1", "#73305c"]], 1, 1)}
      ${lin("gBulb", [["0", "#ffd95a"], ["1", "#ffb73e"]])}
      ${lin("gHosp", [["0", "#8e7f9d"], ["1", "#b6aac2"]], 1, 0)}
      ${lin("gCopA", [["0", "#199df0"], [".35", "#1b8fe0"], [".65", "#4fb374"], ["1", "#f2cf1b"]])}
      ${lin("gCopB", [["0", "#a455f0"], [".5", "#ef5a94"], ["1", "#ffa653"]])}
      ${lin("gFolder", [["0", "#ffdb70"], ["1", "#fcc02e"]], 1, 1)}
      ${lin("gEdgeA", [["0", "#35b5e8"], [".5", "#2fc3d0"], ["1", "#6fe046"]], 1, 0.4)}
      ${lin("gStore", [["0", "#fff"], ["1", "#dcdcdc"]])}
      ${lin("gTeal", [["0", "#62d3de"], [".5", "#15b5c6"], ["1", "#0d7885"]])}
      ${lin("gStart", [["0", "#7fe0ff"], ["1", "#0a93f5"]], 1, 1)}
      ${lin("gCloud", [["0", "#8db6f2"], ["1", "#dfeafc"]])}
      ${lin("gMoon", [["0", "#f7c531"], ["1", "#ef8a17"]])}
      ${lin("gBrain", [["0", "#ff8a2c"], [".3", "#e637c3"], [".6", "#8a55f0"], ["1", "#2f9bf7"]], 1, 1)}
      <radialGradient id="gBubble" cx=".58" cy=".38" r=".62"><stop offset="0" stop-color="#f5f2fa" /><stop offset=".6" stop-color="#e6e0f0" /><stop offset="1" stop-color="#b9acd4" /></radialGradient>
    </defs></svg>`;
  }

  private renderToolbar() {
    return html`<div class="bar toolbar">
      <div class="cell"><svg class="ic dim" width="14" height="20" viewBox="0 0 14 20"><path d="M11 1.500 3 10 11 18.500" /></svg></div>
      <div class="cell"><svg class="ic dim" width="14" height="20" viewBox="0 0 14 20"><path d="M3 1.500 11 10 3 18.500" /></svg></div>
      <div class="cell"><svg class="ic" width="28" height="28" viewBox="0 0 28 28"><path d="M24.500 16.500A11 11 0 1 1 24 9.500M24.500 3.500V9.800H18" /></svg></div>
      <div class="cell"><svg class="ic" width="24" height="30" viewBox="0 0 24 30"><rect x="7.500" y="1.500" width="9" height="16.500" rx="4.500" /><path d="M2.500 13.500C3 26 21 26 21.500 13.500M12 23V28M6 28.300H18" /></svg></div>
      <div class="url">${hospital}<span>localhost:8501</span></div>
      <div class="right">
        <div class="cell star"><svg class="ic" width="32" height="32" viewBox="0 0 32 32"><path d="M16 2.500 20 11.800 30 12.800 22.500 19.500 24.800 29.500 16 24.200 7.200 29.500 9.500 19.500 2 12.800 12 11.800Z" /></svg></div>
        <div class="cell link"><svg class="ic" width="28" height="28" viewBox="0 0 28 28"><path d="M12 6.500 14.500 4C20-1.200 28.500 6.500 23.800 12.500L21 15.500M16 21.500 13.500 24C8 29.200-.5 21.500 4.200 15.500L7 12.500M10.500 17.500 17.500 10.500" /></svg></div>
        <div class="div d1"></div>
        <div class="cell"><svg class="ic" width="32" height="32" viewBox="0 0 32 32"><path d="M8 8H13.500C12 3.500 14 2 16.500 2S21 3.500 19.500 8H27.500V14C22.500 13 21.500 22 27.500 21V28.500H8V21.500C3.500 22.500 2 20.500 2 18S3.500 13.500 8 14.500Z" /></svg></div>
        <div class="cell"><svg class="ic" width="28" height="28" viewBox="0 0 28 28"><path d="M14 3V18M7.500 12.500 14 18.500 20.500 12.500M2 20V23Q2 26.300 5.500 26.300H22.500Q26 26.300 26 23V20" /></svg></div>
        <div class="div d2"></div>
        <div class="cell"><svg class="ic" width="28" height="24" viewBox="0 0 28 24"><path d="M2 3.500H26M8.500 12H19.500M5.500 20.500H22.500" /></svg></div>
        <div class="cell"><svg class="ic" width="34" height="30" viewBox="0 0 34 30"><path d="M2.500 13V17M9.800 7V23M17 1.500V28.500M24.200 7V23M31.500 13V17" /></svg></div>
        <div class="assistant"><svg width="29" height="30" viewBox="0 0 32 33">${blades("#b4b6b5")}</svg><span>Assistant</span></div>
        <div class="div d3"></div>
        <div class="cell"><svg class="ic" width="22" height="14" viewBox="0 0 22 14"><path d="M2 2 11 11.500 20 2" /></svg></div>
        <div class="avatar"></div>
      </div>
    </div>`;
  }

  render() {
    return html`${this.renderDefs()}
      <div class="tabs">
        ${tabs.map((t) => html`<div class="tab ${t.cls}"><div class="fav">${t.icon}</div><div class="title">${t.title}</div></div>`)}
        <svg class="newtab ic" viewBox="0 0 22 22"><path d="M11 1V21M1 11H21" /></svg>
        <div class="winbtns">
          <svg class="win" viewBox="0 0 22 22"><path d="M1 10.500H21" /></svg>
          <svg class="win" viewBox="0 0 22 22"><rect x="1" y="5" width="16" height="16" rx="3" /><path d="M5 1.500H16Q20.500 1.500 20.500 6V17" /></svg>
          <svg class="win" viewBox="0 0 22 22"><path d="M1 1 21 21M21 1 1 21" /></svg>
        </div>
      </div>

      <div class="window">
        ${this.renderToolbar()}
        <div class="bar marks">
          <svg class="ic" width="26" height="26" viewBox="0 0 26 26"><rect x="1.500" y="1.500" width="8.500" height="8.500" rx="1.500" /><rect x="15.500" y="1.500" width="8.500" height="8.500" rx="1.500" /><rect x="1.500" y="15.500" width="8.500" height="8.500" rx="1.500" /><rect x="15.500" y="15.500" width="8.500" height="8.500" rx="1.500" /></svg>
          <div class="div"></div>
          ${bookmarks.map((b) => html`<div class="mark ${b.cls}">${b.icon}<span>${b.label}</span></div>`)}
        </div>

        <div class="page">
          <aside class="sidebar">
            <h2 class="side-h">${microscope("e40")}<span>Medical AI Pipeline</span></h2>
            <div class="ok"><div class="row">${check()}<span>Components Loaded</span></div><div>Successfully</div></div>
            <p class="status strong">Component Status:</p>
            <div class="items">${components.map((c) => html`<div class="row">${check()}<span>${c}</span></div>`)}</div>
            <h2 class="side-h second">${warning}<span>Medical Disclaimer</span></h2>
            <div class="alert">
              <p>This tool provides wellness<br />guidance only.</p>
              <p><span class="strong">Not for medical diagnosis.</span><br />Always consult healthcare<br />professionals for medical<br />concerns.</p>
            </div>
            <h2 class="side-h third">${chart}<span>Recent Analyses</span></h2>
          </aside>

          <main class="main">
            <div class="deploy"><span>Deploy</span><svg class="dots" viewBox="0 0 14 30"><circle cx="7" cy="4.500" r="3.600" fill="#fafafa" /><circle cx="7" cy="15" r="3.600" fill="#fafafa" /><circle cx="7" cy="25.500" r="3.600" fill="#fafafa" /></svg></div>
            <h1 class="h1">
              <svg class="silhouette" viewBox="0 0 76 88"><path d="M0 9Q0 3.500 5 3.500H13Q13.500 0 17 0H37Q41 0 41.500 3.500H57Q62.500 3.500 62.500 9V53H70Q75.500 53 75.500 59V87H0Z" fill="#33863a" /></svg>
              <span>AI Wellness Assistant - Corrected</span>
              <svg class="anchor" viewBox="0 0 32 16"><path d="M13 1.800H8a6.200 6.200 0 0 0 0 12.400H13M19 1.800H24a6.200 6.200 0 0 1 0 12.400H19M11 8H21" /></svg>
            </h1>
            <p class="sub">Medical AI Pipeline with Smart Fallbacks</p>
            <h2 class="h2 first">${tools}<span>Medical AI Tech Stack</span></h2>
            <div class="pills">${stack.map((s) => html`<div class="pill">${check("e26")}<span>${s}</span></div>`)}</div>
            <div class="cols">
              <section class="left">
                <h2 class="h2">${bubble}<span>Medical Symptom Analysis</span></h2>
                <div class="expander">
                  <div class="exp-h"><svg class="chev" viewBox="0 0 20 12"><path d="M2 2 10 10 18 2" /></svg>${bulb}<span>Example Medical Queries</span></div>
                  <div class="queries">${queries.map((q) => html`<div class="q">${memo}<span>${q}</span></div>`)}</div>
                </div>
              </section>
              <section class="rightcol">
                <h2 class="h2">${microscope("e56")}<span>Pipeline Status</span></h2>
                <div class="items">${pipeline.map((c) => html`<div class="row">${check()}<span>${c}</span></div>`)}</div>
                <div class="rule"></div>
              </section>
            </div>
          </main>

          <div class="thumb"></div>
          <svg class="arrow" viewBox="0 0 12 11"><path d="M0 1H12L6 11Z" fill="#808184" /></svg>
          <div class="face"><svg class="e48" viewBox="0 0 48 48"><path d="M11 12 17 18 11 24M38 12 32 18 38 24M21.500 23Q22 26 25 26 28 26 28.500 23" fill="none" stroke="#20222c" stroke-width="3" /></svg></div>
          <div class="brain"><svg width="38" height="36" viewBox="0 0 38 36"><path d="M17.500 3C17.500 0 12 0 10.500 3 7 3 5 6 5.500 9 2.500 11 2 14 3 16 .5 19 1.500 23 4 25 4 29 7 31 9.500 31 11 36 17.500 36 17.500 31.500ZM20.500 3C20.500 0 26 0 27.500 3 31 3 33 6 32.500 9 35.500 11 36 14 35 16 37.500 19 36.500 23 34 25 34 29 31 31 28.500 31 27 36 20.500 36 20.500 31.500Z" fill="url(#gBrain)" /><path d="M17.500 9H13L10 12M6 18H17.500M17.500 27H13L10 24M23 7 26 10 29 7M26 10V13M24 16H30L33 19M31 16V14M23 23 26 26 29 23M26 26V29" fill="none" stroke="#fff" stroke-width="1.300" /></svg></div>
        </div>
      </div>

      <div class="taskbar">
        <div class="weather">
          <svg class="over" viewBox="0 0 58 58"><path d="M22 7C24 15 16 25 1 23 7 33 24 35 31 25 36 17 30 9 22 7Z" fill="url(#gMoon)" /><path d="M11 56Q0 56 0 48 0 40 8 39.500 12 27 23 27 33 27 36 34 54 32 54 45 54 56 43 56Z" fill="url(#gCloud)" /><path d="M8 42Q20 38 27 44 33 37 43 38" fill="none" stroke="#b6cff7" stroke-width="2" /><circle cx="38" cy="16" r="15.800" fill="#ff99a4" /><text class="badge" x="38" y="22.500" text-anchor="middle">9+</text></svg>
          <div><div>28°C</div><div class="cond">Mostly cloudy</div></div>
        </div>
        <svg class="start" viewBox="0 0 46 46"><path d="M1 0H22V22H0V1Q0 0 1 0ZM24 0H45Q46 0 46 1V22H24ZM0 24H22V46H1Q0 46 0 45ZM24 24H46V45Q46 46 45 46H24Z" fill="url(#gStart)" /></svg>
        <div class="search">
          <svg class="mag" viewBox="0 0 30 32"><circle cx="13" cy="13" r="11.500" fill="#5a5654" stroke="#e3e6ea" stroke-width="2.800" /><path d="M20.500 22 27.500 29.500" stroke="#c5cad0" stroke-width="3.600" stroke-linecap="round" /></svg>
          <span>Search</span>
          <svg class="bird" viewBox="0 0 68 50"><path d="M0 49C4 44 12 36 24 36 34 36 40 42 52 43 60 44 66 45 68 48L64 50H1Z" fill="#8a7446" /><path d="M18 8C19 2 25 0 29 3 33 6 33 11 37 16 43 22 48 29 53 33L42 35C35 39 26 38 21 32 16 26 17 20 20 14Z" fill="#8c74bd" /><path d="M19 19C16 26 18 33 24 36 30 38 36 37 35 31 34 25 27 22 22 17Z" fill="#e9e4f2" /><ellipse cx="23.500" cy="8.500" rx="5" ry="6" fill="#eeeaf4" /><circle cx="24" cy="7" r="2.200" fill="#8a1f2a" /><path d="M18.500 5C13 7 10.500 10 11.500 15 15 13 19 13 21 13Z" fill="#f47a20" /><path d="M25 37 24 44 20 45M25 44 28 46M33 38 32 48 28 49M33 44 36 48" fill="none" stroke="#f26a21" stroke-width="3" /></svg>
        </div>
        ${dock.map((a) => html`<div class=${classMap({ app: true, run: !!a.run, active: !!a.active })}>${a.icon}</div>`)}
        <div class="tray">
          <svg class="up" viewBox="0 0 24 14"><path d="M2 12.500 12 2 22 12.500" /></svg>
          <svg class="cloud" viewBox="0 0 34 30"><path d="M8 26.500Q1 26.500 1 20 1 13.500 7.500 13 9 5 17 4.500 23 4.500 25.500 11 33 13 33 19 33 26.500 26 26.500Z" fill="#8b8d8e" stroke="none" /><path d="M2 23 14 16 20 13Q30 10 33 18 34 26 27 26.500H8Q3 26.500 2 23Z" fill="#adafb0" stroke="none" /><path d="M6 3 31 29" stroke="#202325" stroke-width="5" /><path d="M6 2 30 28.500" /></svg>
          <div class="lang"><div>ENG</div><div>IN</div></div>
          <svg class="wifi" viewBox="0 0 34 24"><path d="M2 9.500C10 -.5 24 -.5 32 9.500M7 14C12.500 7 21.500 7 27 14M12 18C15 14.500 19 14.500 22 18" /><circle cx="17" cy="21" r="2.300" fill="#fff" stroke="none" /></svg>
          <svg class="vol" viewBox="0 0 34 32"><path d="M2 12H7L14 5V27L7 20H2ZM19 11.500Q21.500 16 19 20.500M23.500 8Q28 16 23.500 24M27.500 3.500Q35.500 16 27.500 28.500" /></svg>
          <svg class="bat" viewBox="0 0 34 32"><path d="M17 8H25Q29 8 29 12V22Q29 26 25 26H5" /><path d="M31 13.500V20.500" stroke-width="4" /><path d="M10.500 0C3 6 0 10 1.500 16 2.500 19.500 6 20 8 18L3.500 26 10 19C14 16 14.500 8 10.500 0Z" fill="#fff" stroke="none" /></svg>
          <div class="clock"><div>02:12</div><div>28/08/2025</div></div>
        </div>
      </div>`;
  }
}
